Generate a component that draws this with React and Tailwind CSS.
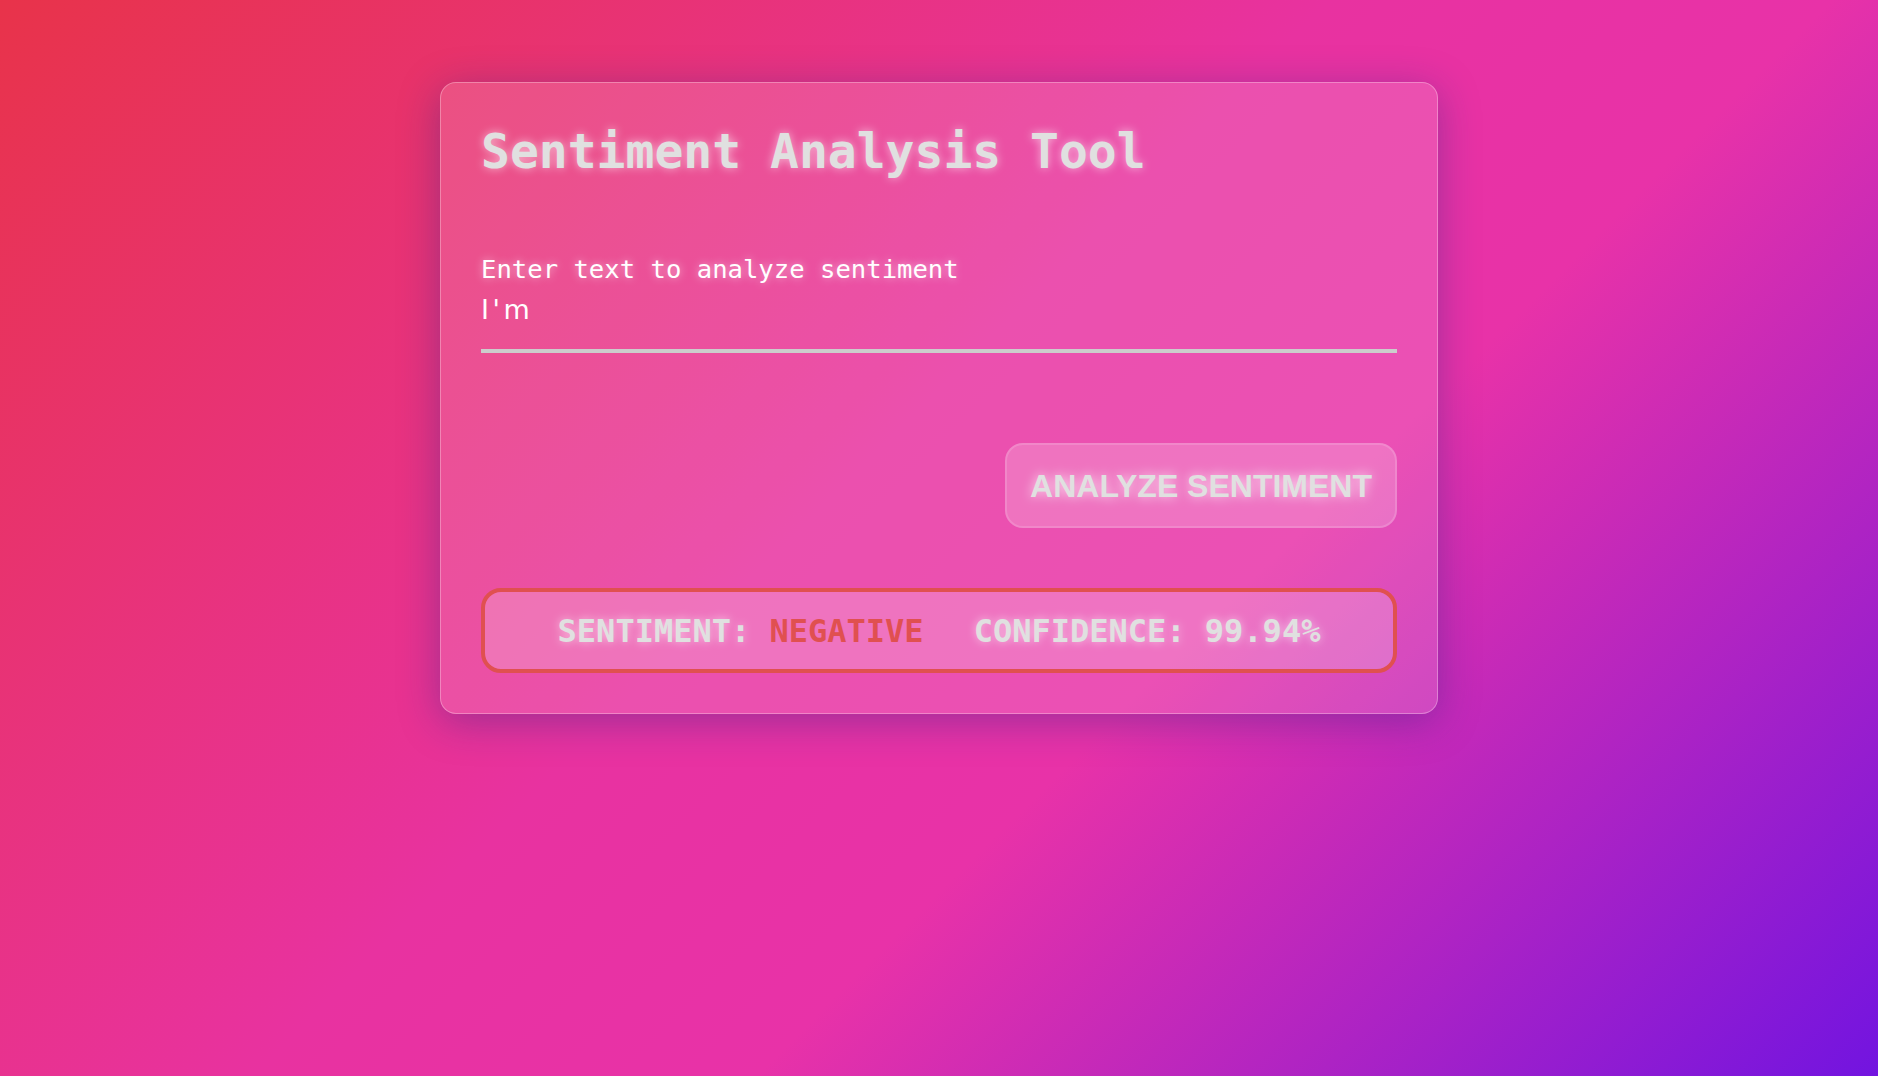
import React, { useState } from 'react';

const mono = "font-['DejaVu_Sans_Mono','Liberation_Mono',monospace]";

const App = () => {
    const [text, setText] = useState("I'm");
    const result = { label: 'NEGATIVE', confidence: 99.94 };

    return (
        <div className="min-h-screen w-full flex justify-center pt-[82px] bg-[linear-gradient(135deg,#e8334a_0%,#e832a0_45%,#e832a8_62%,#7214e0_100%)]">
            <div className="w-[998px] h-fit p-[40px] rounded-[16px] border border-white/30 bg-white/15 shadow-[0_8px_40px_rgba(31,38,135,0.37)]">
                <h1 className={`${mono} text-[48px] leading-[56px] font-bold text-[#e0e0e0] [text-shadow:0_0_10px_rgba(255,255,255,0.6)]`}>
                    Sentiment Analysis Tool
                </h1>

                <div className="mt-[75px]">
                    <label className={`${mono} block text-[25.6px] leading-[30px] text-white [text-shadow:0_0_8px_rgba(255,255,255,0.6)]`}>
                        Enter text to analyze sentiment
                    </label>
                    <div className="mt-[11px] pb-[24px] border-b-4 border-[#cccccc]">
                        <input
                            type="text"
                            value={text}
                            onChange={(e) => setText(e.target.value)}
                            className="block w-full h-[30px] bg-transparent outline-none border-none text-white text-[27px] leading-[30px] tracking-[3.5px] font-['DejaVu_Sans','Noto_Sans',sans-serif]"
                        />
                    </div>
                </div>

                <div className="flex justify-end mt-[90px]">
                    <button className="h-[85px] px-[23px] rounded-[18px] border-2 border-white/15 bg-white/20 text-[#e0e0e0] text-[32px] font-bold font-['Liberation_Sans',Arial,sans-serif] [text-shadow:0_0_12px_rgba(255,255,255,0.8)]">
                        ANALYZE SENTIMENT
                    </button>
                </div>

                <div className="mt-[60px] h-[85px] rounded-[20px] border-4 border-[#e05050] bg-white/20 flex items-center justify-center">
                    <p className={`${mono} text-[32px] font-bold text-[#e0e0e0] whitespace-pre [text-shadow:0_0_10px_rgba(255,255,255,0.6)]`}>
                        <span>SENTIMENT: <span className="text-[#e05050] [text-shadow:none]">{result.label}</span></span>
                        <span className="ml-[50px]">CONFIDENCE: {result.confidence.toFixed(2)}%</span>
                    </p>
                </div>
            </div>
        </div>
    );
};

export default App;
